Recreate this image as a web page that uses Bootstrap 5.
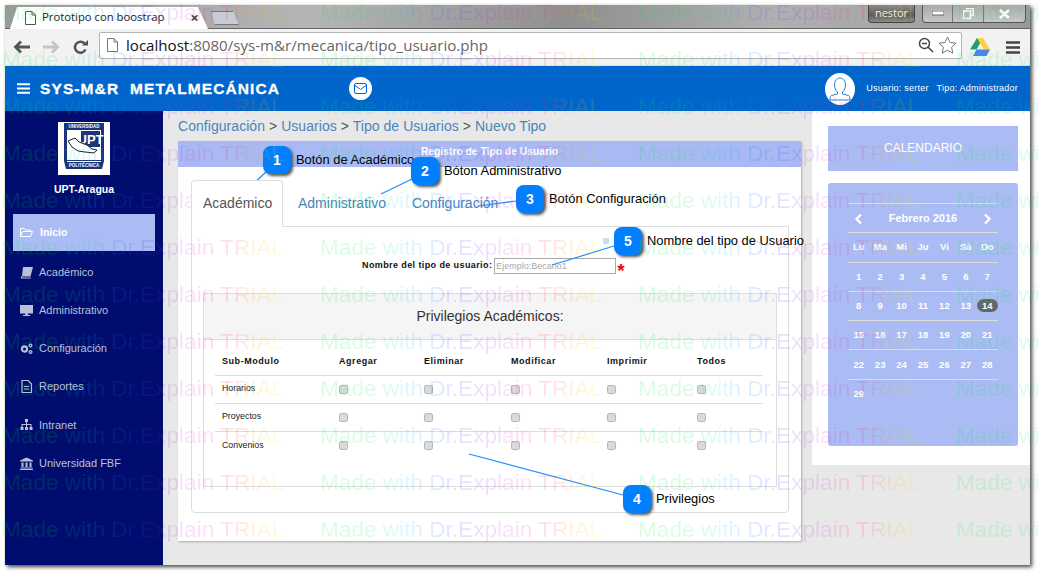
<!DOCTYPE html>
<html lang="es">
  <head>
    <meta charset="utf-8" />
    <meta name="viewport" content="width=device-width, initial-scale=1" />
    <title>Prototipo con boostrap</title>
    <link href="https://cdn.jsdelivr.net/npm/bootstrap@5.3.3/dist/css/bootstrap.min.css" rel="stylesheet" />
    <style>
      html, body { height: 574px; overflow: hidden; background: #fff; font-family: "Liberation Sans", Arial, sans-serif; }
      .app-window { position: relative; margin: 5px 0 0 5px; width: 1025px; height: 560px; box-shadow: 2px 2px 4px #444; }

      /* browser frame */
      .title-bar { height: 24px; background: linear-gradient(100deg, #9a9a9a 0%, #b5b5b5 30%, #8f8f8f 55%, #b0b0b0 75%, #999 100%); border-bottom: 1px solid #666; }
      .tab-live { width: 198px; height: 23px; margin-left: 5px; margin-top: 1px; background: #fff; clip-path: polygon(0 100%, 7px 1px, 188px 1px, 198px 100%); padding-left: 15px; font-size: 11.3px; font-family: "Open Sans", sans-serif; color: #222; gap: 6px; }
      .tab-close { margin-left: 20px; font-size: 15px; font-weight: 700; color: #444; line-height: 1; }
      .tab-new { width: 28px; height: 14px; margin: 6px 0 0 3px; background: #c5ccd6; border: 1px solid #777; clip-path: polygon(0 0, 22px 0, 28px 100%, 4px 100%); }
      .user-chip { width: 47px; height: 18px; background: linear-gradient(#8a8a8a, #5d5d5d 60%, #8d8d8d); color: #f2f2f2; font-size: 11px; border: 1px solid #444; border-top: 0; border-radius: 0 0 4px 4px; margin-right: 7px; font-family: "Open Sans", sans-serif; }
      .win-btns { width: 104px; height: 18px; border: 1px solid #555; border-top: 0; border-radius: 0 0 4px 4px; margin-right: 4px; background: linear-gradient(#a9a9a9, #c8c8c8); }
      .win-btns span { flex: 1; border-right: 1px solid #777; color: #fff; font-weight: 700; font-size: 12px; line-height: 1; }
      .win-btns span:last-child { flex: 1.4; border-right: 0; }
      .tool-bar { height: 37px; background: #f2f2f2; padding: 0 10px 0 8px; border-bottom: 1px solid #ddd; }
      .tool-gap { margin-left: 13px; }
      .addr-box { width: 863px; height: 27px; margin: 0 0 4px 11px; background: #fff; border: 1px solid #b4b4b4; border-radius: 2px; padding: 0 4px 0 7px; font-family: "Open Sans", sans-serif; font-size: 15.1px; color: #666; }
      .addr-box b { font-weight: 400; color: #111; }

      /* app navbar */
      .top-band { height: 45px; background: #0066cc; color: #fff; padding: 0 12px 0 12px; }
      .brand-text { font-weight: 700; font-size: 15.5px; letter-spacing: 1.1px; margin-left: 10px; white-space: pre; -webkit-text-stroke: .3px #fff; }
      .mail-dot { width: 23px; height: 23px; border-radius: 50%; background: #fff; margin-left: 69px; }
      .avatar-dot { width: 30px; height: 32px; border-radius: 50%; background: #fff; margin-left: auto; }
      .who-text { font-size: 9px; margin-left: 11px; letter-spacing: .22px; white-space: pre; }

      /* sidebar */
      .side-col { width: 158px; background: #000d6e; color: #b9c1d6; }
      .side-logo { margin: 11px 0 0 53px; display: block; }
      .side-name { color: #fff; font-size: 10.5px; font-weight: 700; text-align: center; margin-top: 7px; height: 33px; }
      .side-link { height: 38.2px; margin: 0 8px; padding-left: 7px; font-size: 11px; gap: 6px; color: #b9c1d6; text-decoration: none; }
      .side-link svg { width: 13px; height: 13px; fill: #b9c1d6; flex: none; }
      .side-link.is-open { background: #abbcf4; color: #fff; font-weight: 700; height: 37px; margin-top: -1px; margin-bottom: 2px; gap: 7px; font-size: 10.5px; }
      .side-link.is-open svg { fill: none; stroke: #fff; }

      /* main */
      .main-col { background: #e8e8e8; }
      .mid-col { width: 649px; padding: 0 11px 0 15px; }
      .crumbs { height: 30px; font-size: 14px; line-height: 30px; color: #555; letter-spacing: .05px; }
      .crumbs a { color: #4a84bd; text-decoration: none; }
      .form-card { height: 400px; border: 0; border-radius: 0; box-shadow: 1px 1px 2px #aaa; }
      .form-card > .card-header { height: 26px; background: #a8b9f3; color: #fff; border: 0; border-radius: 0; padding: 3px 0 0 0; font-size: 10.3px; font-weight: 700; text-align: center; line-height: 16px; }
      .form-card > .card-body { padding: 13px 12px 0 13px; }
      .form-card .nav-tabs { --bs-nav-tabs-border-color: #ddd; height: 47px; border-bottom: 0; }
      .form-card .nav-link { padding: 12px 10px 0; height: 47px; font-size: 14px; color: #4a84bd; margin-right: 4px; border-radius: 4px 4px 0 0; white-space: nowrap; }
      .form-card .nav-link.active { color: #555; border-color: #ddd #ddd #fff; position: relative; z-index: 1; width: 92px; padding: 12px 11px 0; margin-bottom: 0; }
      .tab-box { height: 287px; border: 1px solid #ddd; border-radius: 0 0 4px 4px; margin-top: -1px; padding: 31px 11px 0; }
      .name-row { height: 16px; padding-left: 159px; }
      .name-label { font-size: 9px; font-weight: 700; letter-spacing: .4px; color: #111; margin: 0 2px 0 0; white-space: nowrap; }
      .name-input { width: 122px; height: 16px; border: 1px solid #aaa; font-size: 9px; padding: 0 1px; color: #888; font-family: "Liberation Sans", sans-serif; border-radius: 0; outline: 0; }
      .name-input::placeholder { color: #aaa; }
      .req-star { color: #f00; font-size: 19px; font-weight: 700; margin: 8px 0 0 1px; line-height: 1; }
      .priv-panel { margin-top: 19px; width: 574px; height: 194px; border-radius: 0; border: 1px solid #ddd; }
      .priv-panel > .card-header { height: 46px; background: #f5f5f5; border-bottom: 1px solid #ddd; border-radius: 0; padding: 0; font-size: 14px; color: #333; text-align: center; line-height: 44px; }
      .priv-grid { width: 548px; margin: 9px 0 0 11px; table-layout: fixed; }
      .priv-grid > :not(caption) > * > * { padding: 0 7px; background: transparent; border-bottom-color: #ddd; vertical-align: middle; box-shadow: none; }
      .priv-grid th { height: 26px; font-size: 9px; letter-spacing: .55px; color: #111; }
      .priv-grid td { height: 28px; font-size: 8.8px; color: #222; }
      .priv-grid tbody tr:last-child td { border-bottom: 0; }
      .priv-grid .col-a { width: 117px; } .priv-grid .col-b { width: 85px; } .priv-grid .col-c { width: 87px; }
      .priv-grid .col-d { width: 96px; } .priv-grid .col-e { width: 90px; } .priv-grid .col-f { width: 73px; }
      .priv-check { width: 9px; height: 9px; margin: 0; background: #dadada; border: 1px solid #b5b5b5; border-radius: 2px; display: block; }

      /* calendar */
      .cal-col { width: 218px; height: 354px; background: #fff; padding: 15px 12px 0 16px; }
      .cal-title { height: 45px; background: #abbcf4; color: #fff; font-size: 12px; text-align: center; line-height: 44px; }
      .cal-box { height: 263px; margin-top: 12px; background: #abbcf4; border-radius: 3px; padding: 20px 20px 0; }
      .cal-grid { width: 150px; table-layout: fixed; color: #fff; font-size: 9.5px; font-weight: 700; text-align: center; }
      .cal-grid td { height: 29.3px; padding: 0; border-top: 1px solid #dcdcdc; }
      .cal-month { font-size: 11px; }
      .cal-today { display: inline-block; width: 21px; height: 13px; line-height: 13px; border-radius: 7px; background: #666; }

      /* callouts */
      .callout-lines { position: absolute; left: 0; top: 0; pointer-events: none; }
      .callout-num { position: absolute; width: 28px; height: 28px; border-radius: 8px; background: #0080ff; color: #fff; font-weight: 700; font-size: 14px; line-height: 28px; text-align: center; box-shadow: 2px 2px 3px #555; }
      .callout-text { position: absolute; font-size: 12.9px; line-height: 14px; color: #000; white-space: nowrap; }
      .callout-dot { position: absolute; left: 603px; top: 238px; width: 6px; height: 6px; border-radius: 1px; background: #bfe3e6; }

      /* watermark */
      .wm-layer { position: absolute; inset: 0; overflow: hidden; pointer-events: none; }
      .wm-row { position: absolute; left: 2px; display: flex; }
      .wm-row span { width: 318px; flex: none; font-size: 22.6px; line-height: 26px; white-space: nowrap; color: transparent; -webkit-background-clip: text; background-clip: text;
        background-image: linear-gradient(90deg, rgba(0,230,70,.14) 0, rgba(0,230,70,.14) 50px, rgba(0,200,255,.13) 85px, rgba(30,100,255,.14) 120px, rgba(90,40,255,.14) 145px, rgba(230,30,220,.14) 190px, rgba(255,30,90,.14) 225px, rgba(255,150,20,.14) 250px, rgba(240,240,0,.14) 275px, rgba(80,240,40,.14) 295px, rgba(0,230,70,.14) 318px); }
    </style>
  </head>
  <body>
    <div class="app-window d-flex flex-column">
      <div class="title-bar d-flex flex-shrink-0">
        <div class="tab-live d-flex align-items-center">
          <svg width="11" height="14" viewBox="0 0 11 14"><path d="M.5.5h6.500l3.500 3.500v9.500h-10zM7 .5v3.500h3.500" fill="#fff" stroke="#555"/></svg>
          <span>Prototipo con boostrap</span>
          <span class="tab-close">×</span>
        </div>
        <div class="tab-new"></div>
        <div class="d-flex ms-auto">
          <div class="user-chip d-flex align-items-center justify-content-center">nestor</div>
          <div class="win-btns d-flex text-center">
            <span class="d-flex align-items-center justify-content-center"><svg width="12" height="5"><rect width="12" height="4" fill="#fff" stroke="#666"/></svg></span>
            <span class="d-flex align-items-center justify-content-center"><svg width="11" height="11" viewBox="0 0 11 11"><path d="M3 .5h7v7H8M.5 3h7v7.500h-7z" fill="none" stroke="#fff" stroke-width="1.500"/></svg></span>
            <span class="d-flex align-items-center justify-content-center"><svg width="13" height="10" viewBox="0 0 13 10"><path d="M2 1l9 8M11 1L2 9" stroke="#fff" stroke-width="2.500"/></svg></span>
          </div>
        </div>
      </div>

      <div class="tool-bar d-flex align-items-center flex-shrink-0">
        <svg width="17" height="14" viewBox="0 0 17 14"><path d="M8 1.500L2.500 7 8 12.500M2.500 7H17" fill="none" stroke="#555" stroke-width="2.800"/></svg>
        <svg class="tool-gap" width="17" height="14" viewBox="0 0 17 14"><path d="M9 1.500L14.500 7 9 12.500M14.500 7H0" fill="none" stroke="#c4c4c4" stroke-width="2.800"/></svg>
        <svg class="tool-gap" width="15" height="15" viewBox="0 0 15 15"><path d="M12.500 9.500A5.500 5.500 0 1 1 11.500 3.500" fill="none" stroke="#555" stroke-width="2.600"/><path d="M9 5.500h6V0z" fill="#555"/></svg>
        <div class="addr-box d-flex align-items-center">
          <svg class="flex-shrink-0" width="11" height="14" viewBox="0 0 11 14"><path d="M.5.5h6.500l3.500 3.500v9.500h-10zM7 .5v3.500h3.500" fill="#fff" stroke="#777"/></svg>
          <span class="ms-1 ps-1"><b>localhost</b>:8080/sys-m&amp;r/mecanica/tipo_usuario.php</span>
          <svg class="ms-auto" width="16" height="16" viewBox="0 0 16 16"><circle cx="6.500" cy="6.500" r="5" fill="none" stroke="#444" stroke-width="1.500"/><path d="M4 6.500h5M10 10l5 5" stroke="#444" stroke-width="1.500"/></svg>
          <svg class="ms-1" width="19" height="18" viewBox="0 0 19 18"><path d="M9.500 1l2.500 5.500 6 .7-4.400 4 1.200 6-5.300-3-5.300 3 1.200-6-4.400-4 6-.7z" fill="#fff" stroke="#777"/></svg>
        </div>
        <svg class="ms-2" width="20" height="18" viewBox="0 0 20 18"><path d="M7 0h6l-6.500 11.500h-6.500z" fill="#1da462"/><path d="M13 0l7 11.500h-6L7 0z" fill="#ffcf3f"/><path d="M3 18l3.500-6.500H20L16.500 18z" fill="#4a86e8"/></svg>
        <svg class="ms-auto" width="14" height="13" viewBox="0 0 14 13"><path d="M0 1.500h14M0 6.500h14M0 11.500h14" stroke="#444" stroke-width="2.600"/></svg>
      </div>

      <div class="top-band d-flex align-items-center flex-shrink-0">
        <svg class="flex-shrink-0" width="13" height="11" viewBox="0 0 13 11"><path d="M0 1.200h13M0 5.500h13M0 9.800h13" stroke="#fff" stroke-width="2"/></svg>
        <span class="brand-text">SYS-M&amp;R  METALMECÁNICA</span>
        <span class="mail-dot d-flex align-items-center justify-content-center">
          <svg width="13" height="11" viewBox="0 0 13 11"><rect x=".5" y=".5" width="12" height="10" rx="1.500" fill="none" stroke="#0066cc"/><path d="M.5 2l6 4.500 6-4.500" fill="none" stroke="#0066cc"/></svg>
        </span>
        <span class="avatar-dot d-flex align-items-center justify-content-center">
          <svg width="22" height="24" viewBox="0 0 22 24"><path d="M11 1c3.500 0 5.500 3 5.500 7 0 3-1 5.500-3 7v2l6 1.500c1 .3 1.500 1.500 1.500 4.500H1c0-3 .5-4.200 1.500-4.500l6-1.500v-2c-2-1.500-3-4-3-7 0-4 2-7 5.500-7z" fill="none" stroke="#2f7fd0"/></svg>
        </span>
        <span class="who-text">Usuario: serter   Tipo: Administrador</span>
      </div>

      <div class="d-flex flex-grow-1" style="min-height:0">
        <aside class="side-col flex-shrink-0">
          <svg class="side-logo" width="52" height="53" viewBox="0 0 52 53">
            <rect width="52" height="53" fill="#fff"/>
            <path d="M6 1h40v38l-2 8H8l-2-8z" fill="#1c3478"/>
            <rect x="9" y="8" width="34" height="30" fill="#fff"/>
            <rect x="23" y="9" width="19" height="16" fill="#1c3478"/>
            <text x="32.500" y="22" font-size="13" font-weight="700" fill="#fff" text-anchor="middle" font-family="Liberation Sans">UPT</text>
            <text x="26" y="6" font-size="4.500" font-weight="700" fill="#fff" text-anchor="middle" font-family="Liberation Sans">UNIVERSIDAD</text>
            <path d="M10 19l7-3 4 4 8 3 5 4 5 1-3 3-9-1-7-1-6-4z" fill="#fff" stroke="#222"/>
            <rect x="9" y="39" width="34" height="1" fill="#fff"/>
            <text x="26" y="45" font-size="4.500" font-weight="700" fill="#fff" text-anchor="middle" font-family="Liberation Sans">POLITÉCNICA</text>
          </svg>
          <div class="side-name">UPT-Aragua</div>
          <nav class="nav flex-column">
            <a class="side-link is-open d-flex align-items-center" href="#"><svg viewBox="0 0 13 13"><path d="M.5 10.500v-8h4l1 1.500h5v1.500M.5 10.500l2-5h10l-2 5z"/></svg>Inicio</a>
            <a class="side-link d-flex align-items-center" href="#"><svg viewBox="0 0 13 13"><path d="M3 1h10l-2.500 9.500H1.500c-1 0-1 2 0 2h9l.5-1H3C2.500 11.500 2 11 2 10.500z"/></svg>Académico</a>
            <a class="side-link d-flex align-items-center" href="#"><svg viewBox="0 0 13 13"><path d="M0 1h13v8.500H7.800v1.500H10v1H3v-1h2.200V9.500H0z"/></svg>Administrativo</a>
            <a class="side-link d-flex align-items-center" href="#"><svg viewBox="0 0 13 13"><circle cx="4.500" cy="7" r="2.600" fill="none" stroke="#b9c1d6" stroke-width="2.200"/><circle cx="10.500" cy="3.500" r="1.400" fill="none" stroke="#b9c1d6" stroke-width="1.300"/><circle cx="10.500" cy="10" r="1.400" fill="none" stroke="#b9c1d6" stroke-width="1.300"/></svg>Configuración</a>
            <a class="side-link d-flex align-items-center" href="#"><svg viewBox="0 0 13 13"><path d="M2 .5h6l3.500 3.500v8.500H2z" fill="none" stroke="#b9c1d6" stroke-width="1.200"/><path d="M4 6h5v1H4zM4 8.500h5v1H4z"/></svg>Reportes</a>
            <a class="side-link d-flex align-items-center" href="#"><svg viewBox="0 0 13 13"><path d="M5 1h3v3H7v2h4.500v3h1v3h-3V9h.9V7H7v2h1v3H5V9h1V7H2.600v2h.9v3h-3V9h1V6H6V4H5z"/></svg>Intranet</a>
            <a class="side-link d-flex align-items-center" href="#"><svg viewBox="0 0 13 13"><path d="M6.500 .5l6.500 3v1H0v-1zM1.500 5.500h2v4.500h-2zM5.500 5.500h2v4.500h-2zM9.500 5.500h2v4.500h-2zM.5 10.500h12v1H.5zM0 12h13v1H0z"/></svg>Universidad FBF</a>
          </nav>
        </aside>

        <div class="main-col d-flex flex-grow-1">
          <main class="mid-col flex-shrink-0">
            <div class="crumbs"><a href="#">Configuración</a> &gt; <a href="#">Usuarios</a> &gt; <a href="#">Tipo de Usuarios</a> &gt; <a href="#">Nuevo Tipo</a></div>
            <section class="card form-card">
              <div class="card-header">Registro de Tipo de Usuario</div>
              <div class="card-body">
                <ul class="nav nav-tabs">
                  <li class="nav-item"><a class="nav-link active" href="#">Académico</a></li>
                  <li class="nav-item"><a class="nav-link" href="#">Administrativo</a></li>
                  <li class="nav-item"><a class="nav-link" href="#">Configuración</a></li>
                </ul>
                <div class="tab-box">
                  <div class="name-row d-flex align-items-center">
                    <label class="name-label" for="tipoNombre">Nombre del tipo de usuario:</label>
                    <input class="name-input" id="tipoNombre" type="text" placeholder="Ejemplo:Becario1" />
                    <span class="req-star">*</span>
                  </div>
                  <div class="card priv-panel">
                    <div class="card-header">Privilegios Académicos:</div>
                    <table class="table priv-grid mb-0">
                      <thead>
                        <tr><th class="col-a">Sub-Modulo</th><th class="col-b">Agregar</th><th class="col-c">Eliminar</th><th class="col-d">Modificar</th><th class="col-e">Imprimir</th><th class="col-f">Todos</th></tr>
                      </thead>
                      <tbody id="privRows"></tbody>
                    </table>
                  </div>
                </div>
              </div>
            </section>
          </main>

          <div class="cal-col flex-shrink-0">
            <div class="cal-title">CALENDARIO</div>
            <div class="cal-box">
              <table class="cal-grid">
                <tbody id="calRows">
                  <tr>
                    <td><svg width="9" height="12" viewBox="0 0 9 12"><path d="M7 1.500L2.500 6 7 10.500" fill="none" stroke="#fff" stroke-width="2.400"/></svg></td>
                    <td colspan="5" class="cal-month">Febrero 2016</td>
                    <td><svg width="9" height="12" viewBox="0 0 9 12"><path d="M2 1.500L6.500 6 2 10.500" fill="none" stroke="#fff" stroke-width="2.400"/></svg></td>
                  </tr>
                </tbody>
              </table>
            </div>
          </div>
        </div>
      </div>
    </div>

    <!-- marcadores de ayuda -->
    <svg class="callout-lines" width="1038" height="574">
      <g stroke="#1e8fff" stroke-width="1.200" fill="none">
        <path d="M266 172L238 198"/>
        <path d="M412 179L381 194"/>
        <path d="M516 201L478 206"/>
        <path d="M614 246L552 265"/>
        <path d="M623 495L469 454"/>
      </g>
    </svg>
    <div class="callout-dot"></div>
    <div class="callout-num" style="left:263px;top:146px">1</div><div class="callout-text" style="left:296px;top:153px">Botón de Académico</div>
    <div class="callout-num" style="left:411px;top:157px">2</div><div class="callout-text" style="left:444px;top:164px">Bóton Administrativo</div>
    <div class="callout-num" style="left:516px;top:185px">3</div><div class="callout-text" style="left:549px;top:192px">Botón Configuración</div>
    <div class="callout-num" style="left:623px;top:485px">4</div><div class="callout-text" style="left:656px;top:492px">Privilegios</div>
    <div class="callout-num" style="left:614px;top:227px">5</div><div class="callout-text" style="left:647px;top:234px">Nombre del tipo de Usuario</div>

    <div class="wm-layer" id="wmLayer"></div>

    <script>
      // filas de privilegios
      const privBody = document.getElementById("privRows");
      ["Horarios", "Proyectos", "Convenios"].forEach((name) => {
        const boxes = '<td><input class="priv-check form-check-input" type="checkbox" /></td>'.repeat(5);
        privBody.insertAdjacentHTML("beforeend", `<tr><td>${name}</td>${boxes}</tr>`);
      });

      // calendario febrero 2016
      const calBody = document.getElementById("calRows");
      const weekRows = [
        ["Lu", "Ma", "Mi", "Ju", "Vi", "Sá", "Do"],
        [1, 2, 3, 4, 5, 6, 7],
        [8, 9, 10, 11, 12, 13, 14],
        [15, 16, 17, 18, 19, 20, 21],
        [22, 23, 24, 25, 26, 27, 28],
        [29, "", "", "", "", "", ""],
      ];
      weekRows.forEach((row) => {
        const cells = row.map((d) => `<td>${d === 14 ? '<span class="cal-today">14</span>' : d}</td>`).join("");
        calBody.insertAdjacentHTML("beforeend", `<tr>${cells}</tr>`);
      });

      // marca de agua
      const wm = document.getElementById("wmLayer");
      for (let r = 0; r < 12; r++) {
        const row = document.createElement("div");
        row.className = "wm-row";
        row.style.top = r * 47 + "px";
        row.innerHTML = "<span>Made with Dr.Explain TRIAL</span>".repeat(4);
        wm.appendChild(row);
      }
    </script>
    <script src="https://cdn.jsdelivr.net/npm/bootstrap@5.3.3/dist/js/bootstrap.bundle.min.js"></script>
  </body>
</html>
